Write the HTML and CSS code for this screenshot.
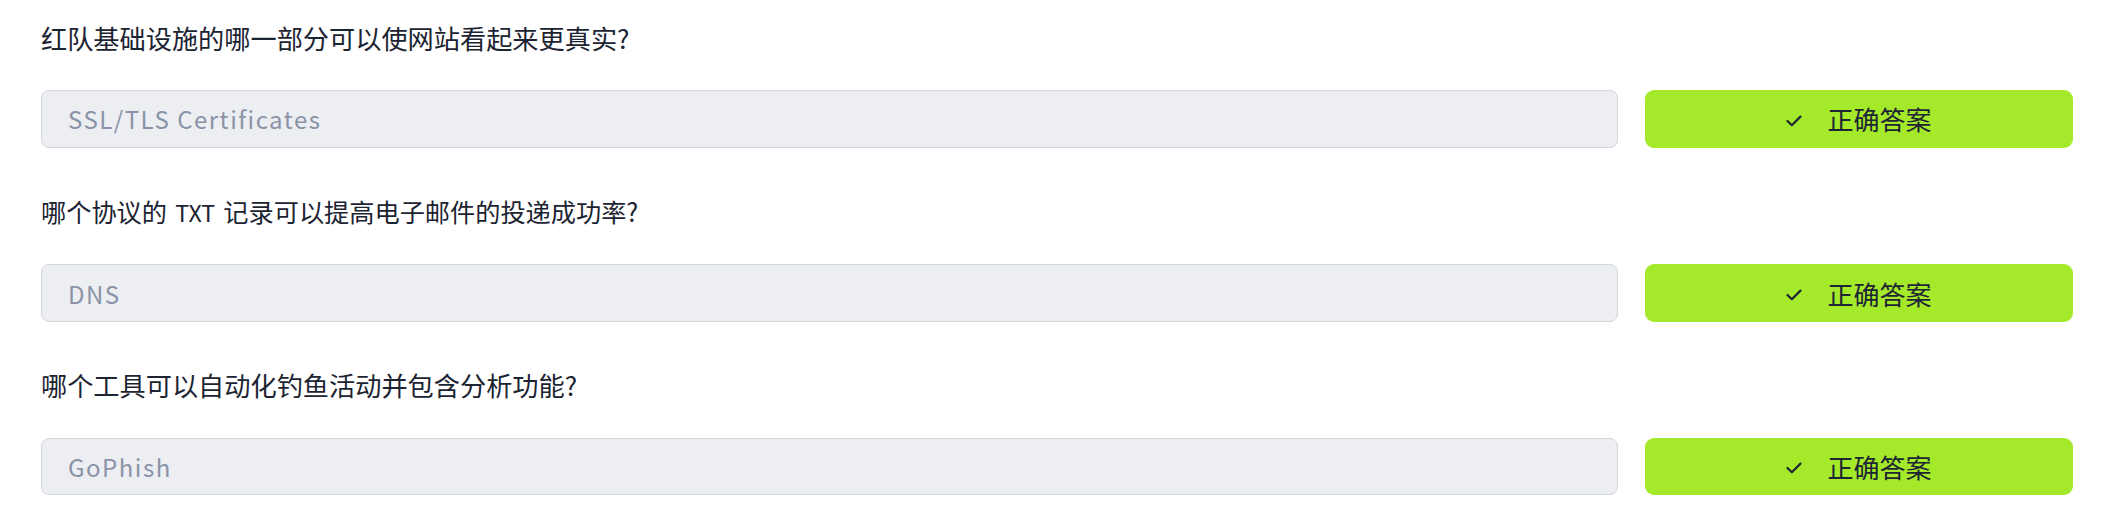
FILE: index.html
```html
<!DOCTYPE html>
<html lang="zh-CN">
<head>
<meta charset="utf-8">
<title>Quiz</title>
<link rel="stylesheet" href="styles.css">
</head>
<body>
<main class="quiz">
  <section class="item">
    <p class="question">红队基础设施的哪一部分可以使网站看起来更真实?</p>
    <div class="row">
      <div class="answer">SSL/TLS Certificates</div>
      <button class="correct" type="button">
        <svg class="check" width="16" height="12" viewBox="0 0 16 12" aria-hidden="true"><path d="M1.5 6 L5.8 10.2 L14.5 1.6" fill="none" stroke="currentColor" stroke-width="2.2" stroke-linecap="round" stroke-linejoin="round"/></svg>
        <span>正确答案</span>
      </button>
    </div>
  </section>
  <section class="item">
    <p class="question question--compact">哪个协议的<span class="latin"> TXT </span>记录可以提高电子邮件的投递成功率?</p>
    <div class="row">
      <div class="answer">DNS</div>
      <button class="correct" type="button">
        <svg class="check" width="16" height="12" viewBox="0 0 16 12" aria-hidden="true"><path d="M1.5 6 L5.8 10.2 L14.5 1.6" fill="none" stroke="currentColor" stroke-width="2.2" stroke-linecap="round" stroke-linejoin="round"/></svg>
        <span>正确答案</span>
      </button>
    </div>
  </section>
  <section class="item">
    <p class="question">哪个工具可以自动化钓鱼活动并包含分析功能?</p>
    <div class="row">
      <div class="answer">GoPhish</div>
      <button class="correct" type="button">
        <svg class="check" width="16" height="12" viewBox="0 0 16 12" aria-hidden="true"><path d="M1.5 6 L5.8 10.2 L14.5 1.6" fill="none" stroke="currentColor" stroke-width="2.2" stroke-linecap="round" stroke-linejoin="round"/></svg>
        <span>正确答案</span>
      </button>
    </div>
  </section>
</main>
</body>
</html>
```

FILE: styles.css
```css
html, body {
  margin: 0;
  padding: 0;
  background: #ffffff;
}

body {
  font-family: "Noto Sans CJK SC", "Noto Sans", sans-serif;
  color: #1e2533;
}

.quiz {
  padding: 18.5px 43px 0 41px;
  display: flex;
  flex-direction: column;
}

.item {
  display: flex;
  flex-direction: column;
  margin-bottom: 44.3px;
}

.question {
  margin: 0 0 33.5px 0;
  font-family: "Noto Sans CJK SC", sans-serif;
  font-size: 26.2px;
  line-height: 38px;
  color: #1c2331;
}

.question--compact {
  font-size: 25.2px;
}

.latin {
  font-size: 0.92em;
  margin: 0 3px;
}

.row {
  display: flex;
  gap: 27px;
  height: 57.5px;
}

.answer {
  flex: 1;
  box-sizing: border-box;
  display: flex;
  align-items: center;
  padding: 0 26px;
  background: #eceef2;
  border: 1px solid #d3d7df;
  border-radius: 8px;
  font-size: 24px;
  letter-spacing: 1.5px;
  color: #8a93a7;
}

.correct {
  width: 428px;
  flex: none;
  box-sizing: border-box;
  display: flex;
  align-items: center;
  justify-content: center;
  gap: 25px;
  padding: 0;
  border: none;
  border-radius: 9px;
  background: #a4ea2a;
  color: #1e2533;
  font-family: "Noto Sans CJK SC", "Noto Sans", sans-serif;
  font-size: 26px;
}

.check {
  display: block;
  margin-top: 4px;
}
```
